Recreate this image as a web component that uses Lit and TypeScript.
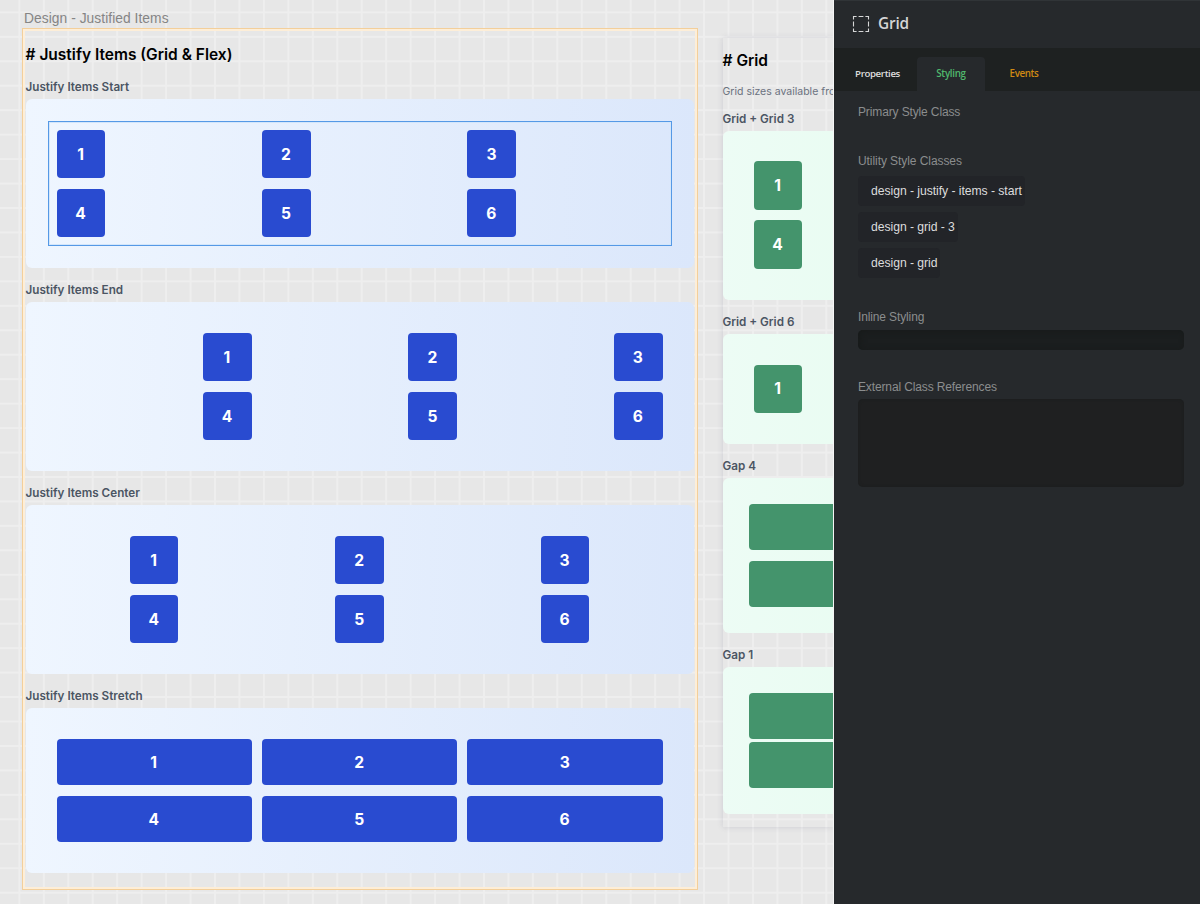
import { LitElement, html, css } from "lit";
import { customElement, property } from "lit/decorators.js";
import { classMap } from "lit/directives/class-map.js";

@customElement("demo-section")
class DemoSection extends LitElement {
  @property() label = "";
  @property() tone = "blue";
  @property() mode = "start";
  @property({ type: Number }) count = 6;
  @property({ type: Number }) columns = 3;
  @property({ type: Boolean }) selected = false;

  static styles = css`
    :host { display: block; }
    .label {
      height: 18px; line-height: 18px; padding-bottom: 3px;
      font-size: 11.7px; font-weight: 600; color: #4b5563; white-space: nowrap;
    }
    .panel { border-radius: 6px; padding: 21.7px 22px; }
    .blue { background: linear-gradient(92deg, #eff6ff, #dbe7fb); }
    .green { background: linear-gradient(92deg, #edfcf5, #dcfce7 600px); }
    .grid {
      display: grid; grid-template-columns: repeat(3, 1fr);
      gap: 10.4px; padding: 8px; border: 1px solid transparent;
    }
    .selected { border-color: #5599e6; box-shadow: inset 0 0 0 1px #d3e6fb; }
    .start { justify-items: start; }
    .end { justify-items: end; }
    .center { justify-items: center; }
    .tile {
      width: 48.6px; height: 48.6px; border-radius: 4px; color: #fff;
      font-size: 15.6px; font-weight: 700;
      display: flex; align-items: center; justify-content: center;
      box-sizing: border-box; padding-right: 0.6px;
    }
    .blue .tile { background: #294bd0; }
    .green .tile { background: #44946c; }
    .stretch .tile, .gap4 .tile, .gap1 .tile { width: auto; height: 46.6px; }
    .single { grid-template-columns: 1fr; }
    .gap4, .gap1 { padding: 3px; }
    .gap1 { row-gap: 2.4px; }
  `;

  render() {
    return html`
      <div class="label">${this.label}</div>
      <div class=${classMap({ panel: true, [this.tone]: true })}>
        <div class=${classMap({ grid: true, [this.mode]: true, selected: this.selected, single: this.columns === 1 })}>
          ${this.mode.startsWith("gap")
            ? Array.from({ length: this.count }, () => html`<div class="tile"></div>`)
            : Array.from({ length: this.count }, (_, i) => html`<div class="tile">${1 + i * (this.columns === 1 ? 3 : 1)}</div>`)}
        </div>
      </div>
    `;
  }
}

@customElement("style-inspector")
class StyleInspector extends LitElement {
  static styles = css`
    :host {
      display: block; height: 904px; box-sizing: border-box;
      background: #26292c; border-top: 1px solid #303437;
      font-family: "Liberation Sans", sans-serif; color: #8b8d8e;
      box-shadow: -1px 0 0 #f5f5f5;
    }
    .head {
      height: 47px; display: flex; align-items: center; gap: 8px; padding: 0 0 2px 18px;
      font: 600 15.4px "Open Sans", sans-serif; letter-spacing: -0.2px; color: #d4d5d6; box-sizing: border-box;
    }
    .tabs {
      height: 42.5px; background: #1e2121; display: flex; align-items: flex-end;
      font: 600 9.8px "Open Sans", sans-serif; color: #dedede;
    }
    .tab { height: 34px; line-height: 34px; text-align: center; }
    .t1 { width: 83px; padding-left: 4px; box-sizing: border-box; font-size: 9.7px; letter-spacing: -0.38px; }
    .t2 { width: 68px; background: #26292c; color: #50b86c; border-radius: 4px 4px 0 0; letter-spacing: -0.3px; }
    .t3 { width: 78px; color: #d08a13; letter-spacing: -0.4px; }
    .body { padding: 13.5px 16px 0 24px; font-size: 12px; }
    .caption { height: 16px; line-height: 16px; white-space: nowrap; letter-spacing: -0.13px; }
    .utility { margin-top: 32.5px; letter-spacing: -0.07px; }
    .chips { display: flex; flex-direction: column; align-items: flex-start; gap: 6px; margin-top: 7px; }
    .chip {
      height: 30px; line-height: 30px; padding: 0 3px 0 13px; border-radius: 4px;
      background: #222428; color: #dcdcdd; font-size: 12.2px; letter-spacing: -0.05px; white-space: nowrap;
    }
    .inline { margin-top: 31px; }
    .input { height: 20px; margin-top: 5px; border-radius: 5px; background: #1b1e1f; box-shadow: inset 2px 1px 6px #171a1a; }
    .external { margin-top: 29px; }
    .area { height: 88px; margin-top: 4px; border-radius: 5px; background: #1f2021; box-shadow: inset 0 0 3px #1b1d1e; }
  `;

  render() {
    return html`
      <div class="head">
        <svg width="18" height="18" viewBox="0 0 18 18" fill="none" stroke="#d6d7d8" stroke-width="1.1">
          <path d="M1.5 4.6V1.5H4.6M13.4 1.5h3.1V4.6M16.5 13.4v3.1H13.4M4.6 16.5H1.5V13.4M6.6 1.5h4.8M6.6 16.5h4.8M1.5 6.6v4.8M16.5 6.6v4.8" />
        </svg>
        <span>Grid</span>
      </div>
      <div class="tabs">
        <div class="tab t1">Properties</div>
        <div class="tab t2">Styling</div>
        <div class="tab t3">Events</div>
      </div>
      <div class="body">
        <div class="caption">Primary Style Class</div>
        <div class="caption utility">Utility Style Classes</div>
        <div class="chips">
          ${["design - justify - items - start", "design - grid - 3", "design - grid"].map(
            (name) => html`<div class="chip">${name}</div>`
          )}
        </div>
        <div class="caption inline">Inline Styling</div>
        <div class="input"></div>
        <div class="caption external">External Class References</div>
        <div class="area"></div>
      </div>
    `;
  }
}

@customElement("app-root")
class AppRoot extends LitElement {
  static styles = css`
    :host {
      display: grid; grid-template-columns: 834px 366px;
      width: 1200px; height: 904px; overflow: hidden;
      font-family: Inter, sans-serif;
    }
    .canvas {
      display: flex; align-items: flex-start; overflow: hidden; height: 904px; box-sizing: border-box;
      padding: 10px 0 0 22px; gap: 24.5px;
      background-color: #e7e7e7;
      background-image:
        linear-gradient(90deg, #eeeeee 1.5px, transparent 1.5px),
        linear-gradient(#eeeeee 1.5px, transparent 1.5px);
      background-size: 24.46px 24.46px;
      background-position: 18.4px 11.4px;
    }
    .name {
      height: 18px; padding-left: 2px;
      font: 13.8px/18px "Liberation Sans", sans-serif; letter-spacing: 0.05px; color: #858585; white-space: nowrap;
    }
    .frame {
      width: 676px; height: 861.5px; box-sizing: border-box;
      border: 1px solid #f3cf9b; box-shadow: inset 0 0 0 2px #fdeed8;
      padding: 0 3.5px 0 2.5px;
    }
    h1 { margin: 0; font-size: 15.5px; line-height: 20px; font-weight: 600; color: #000; white-space: nowrap; }
    .frame h1 { padding: 16px 0 13.2px; }
    .frame demo-section { margin-bottom: 13.05px; }
    .board {
      width: 111.5px; flex: none; height: 789px; margin-top: 27.5px; box-sizing: border-box; padding-top: 13.5px;
      box-shadow: 0 0 6px rgba(70, 70, 100, 0.16);
    }
    .board demo-section { width: 180px; margin-bottom: 13.1px; }
    .note { margin: 12px 0 8.8px; height: 18px; font-size: 10.5px; line-height: 18px; color: #6b7280; white-space: nowrap; }
    style-inspector { position: relative; }
  `;

  render() {
    return html`
      <div class="canvas">
        <div>
          <div class="name">Design - Justified Items</div>
          <div class="frame">
            <h1># Justify Items (Grid &amp; Flex)</h1>
            <demo-section label="Justify Items Start" mode="start" selected></demo-section>
            <demo-section label="Justify Items End" mode="end"></demo-section>
            <demo-section label="Justify Items Center" mode="center"></demo-section>
            <demo-section label="Justify Items Stretch" mode="stretch"></demo-section>
          </div>
        </div>
        <div class="board">
          <h1># Grid</h1>
          <div class="note">Grid sizes available fro</div>
          <demo-section tone="green" label="Grid + Grid 3" mode="start" columns="1" count="2"></demo-section>
          <demo-section tone="green" label="Grid + Grid 6" mode="start" columns="1" count="1"></demo-section>
          <demo-section tone="green" label="Gap 4" mode="gap4" columns="1" count="2"></demo-section>
          <demo-section tone="green" label="Gap 1" mode="gap1" columns="1" count="2"></demo-section>
        </div>
      </div>
      <style-inspector></style-inspector>
    `;
  }
}
